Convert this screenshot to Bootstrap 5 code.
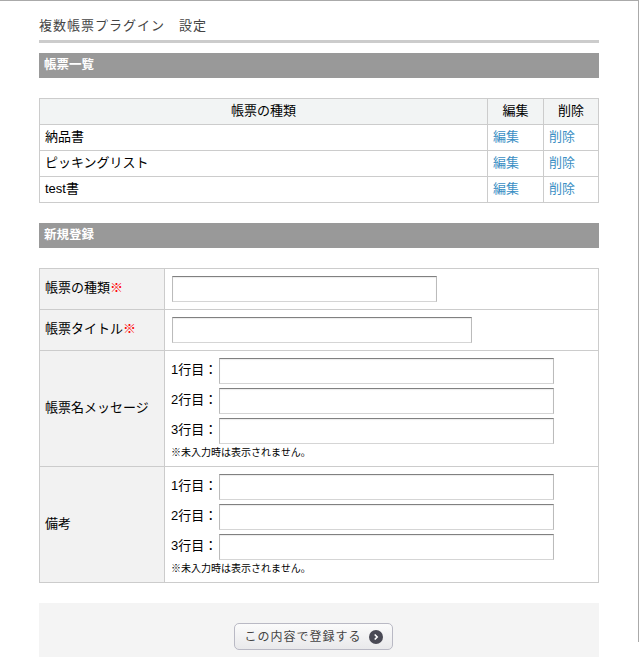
<!doctype html>
<html lang="ja">

<head>
  <meta charset="utf-8">
  <title>複数帳票プラグイン 設定</title>
  <link href="https://cdn.jsdelivr.net/npm/bootstrap@5.3.3/dist/css/bootstrap.min.css" rel="stylesheet">
  <style>
    html, body {
      height: 657px;
      overflow: hidden;
    }

    body {
      background: #fff;
      color: #000;
      font-family: "Liberation Sans", "Noto Sans CJK JP", sans-serif;
      font-size: 13px;
    }

    .page-frame {
      border-top: 1px solid #aaa;
      border-right: 1px solid #aaa;
      height: 642px;
    }

    .page-body {
      width: 560px;
      margin-left: 39px;
    }

    .page-title {
      font-size: 13px;
      font-weight: 400;
      letter-spacing: 1px;
      line-height: 20px;
      color: #444;
      margin: 0 0 10px;
      padding: 15px 0 4px;
      border-bottom: 3px solid #ccc;
      height: 42px;
    }

    .section-bar {
      background: #999;
      color: #fff;
      font-size: 12.5px;
      font-weight: 700;
      line-height: 24px;
      height: 25px;
      padding-left: 5px;
      margin: 0;
    }

    .list-table {
      width: 560px;
      table-layout: fixed;
      border-collapse: collapse;
      margin: 20px 0;
    }

    .list-table th,
    .list-table td {
      border: 1px solid #ccc;
      height: 26px;
      padding: 0 5px 2px;
      font-weight: 400;
      vertical-align: middle;
    }

    .list-table th {
      background: #f2f4f4;
      text-align: center;
    }

    .list-table a {
      color: #3b8fc4;
      text-decoration: none;
    }

    .form-table {
      width: 560px;
      table-layout: fixed;
      border-collapse: collapse;
      margin-top: 20px;
    }

    .form-table th,
    .form-table td {
      border: 1px solid #ccc;
      padding: 7px;
      vertical-align: middle;
    }

    .form-table th {
      background: #f2f2f2;
      font-weight: 400;
      padding: 5px 5px 7px;
    }

    .req-mark {
      color: #f00;
    }

    .text-box {
      display: block;
      height: 26px;
      padding: 0 4px;
      border: 1px solid #bbb;
      border-top-color: #808080;
      border-bottom-color: #d5d5d5;
      background: #fff;
      border-radius: 0;
      box-shadow: inset 0 1px 1px rgba(0, 0, 0, .08);
      outline: 0;
    }

    .box-short {
      width: 265px;
    }

    .box-mid {
      width: 300px;
    }

    .line-label {
      width: 47px;
      line-height: 24px;
      margin-left: -1px;
      margin-right: 1px;
    }

    .box-line {
      width: 335px;
    }

    .line-row + .line-row {
      margin-top: 4px;
    }

    .note-text {
      font-size: 10px;
      line-height: 14px;
      margin: 2px 0 -1px -1px;
    }

    .submit-area {
      background: #f4f4f4;
      margin-top: 20px;
      height: 60px;
      padding: 20px 11px 0 0;
    }

    .submit-btn {
      width: 159px;
      height: 27px;
      padding: 0;
      gap: 7px;
      color: #444;
      font-size: 12px;
      letter-spacing: 1px;
      border: 1px solid #b9b9c4;
      border-radius: 5px;
      background: linear-gradient(#fbfbfb, #e9e9eb);
    }

    .submit-btn svg {
      width: 14px;
      height: 14px;
    }
  </style>
</head>

<body>
  <div class="page-frame">
    <div class="page-body">
      <h1 class="page-title">複数帳票プラグイン　設定</h1>

      <h2 class="section-bar">帳票一覧</h2>
      <table class="list-table">
        <colgroup>
          <col>
          <col style="width: 56px">
          <col style="width: 55px">
        </colgroup>
        <thead>
          <tr>
            <th>帳票の種類</th>
            <th>編集</th>
            <th>削除</th>
          </tr>
        </thead>
        <tbody>
          <tr>
            <td>納品書</td>
            <td><a href="#">編集</a></td>
            <td><a href="#">削除</a></td>
          </tr>
          <tr>
            <td>ピッキングリスト</td>
            <td><a href="#">編集</a></td>
            <td><a href="#">削除</a></td>
          </tr>
          <tr>
            <td>test書</td>
            <td><a href="#">編集</a></td>
            <td><a href="#">削除</a></td>
          </tr>
        </tbody>
      </table>

      <h2 class="section-bar">新規登録</h2>
      <table class="form-table">
        <colgroup>
          <col style="width: 125px">
          <col>
        </colgroup>
        <tbody>
          <tr>
            <th>帳票の種類<span class="req-mark">※</span></th>
            <td><input type="text" class="text-box box-short"></td>
          </tr>
          <tr>
            <th>帳票タイトル<span class="req-mark">※</span></th>
            <td><input type="text" class="text-box box-mid"></td>
          </tr>
          <tr>
            <th>帳票名メッセージ</th>
            <td>
              <div class="line-row d-flex"><span class="line-label">1行目：</span><input type="text" class="text-box box-line"></div>
              <div class="line-row d-flex"><span class="line-label">2行目：</span><input type="text" class="text-box box-line"></div>
              <div class="line-row d-flex"><span class="line-label">3行目：</span><input type="text" class="text-box box-line"></div>
              <div class="note-text">※未入力時は表示されません。</div>
            </td>
          </tr>
          <tr>
            <th>備考</th>
            <td>
              <div class="line-row d-flex"><span class="line-label">1行目：</span><input type="text" class="text-box box-line"></div>
              <div class="line-row d-flex"><span class="line-label">2行目：</span><input type="text" class="text-box box-line"></div>
              <div class="line-row d-flex"><span class="line-label">3行目：</span><input type="text" class="text-box box-line"></div>
              <div class="note-text">※未入力時は表示されません。</div>
            </td>
          </tr>
        </tbody>
      </table>

      <div class="submit-area d-flex justify-content-center">
        <button type="button" class="btn submit-btn d-inline-flex align-items-center justify-content-center">
          この内容で登録する
          <svg viewBox="0 0 14 14" aria-hidden="true">
            <circle cx="7" cy="7" r="7" fill="#4a4a55"></circle>
            <path d="M5.7 4.5 8.2 7 5.7 9.5" fill="none" stroke="#fff" stroke-width="1.6"></path>
          </svg>
        </button>
      </div>
    </div>
  </div>
  <script src="https://cdn.jsdelivr.net/npm/bootstrap@5.3.3/dist/js/bootstrap.bundle.min.js"></script>
</body>

</html>
